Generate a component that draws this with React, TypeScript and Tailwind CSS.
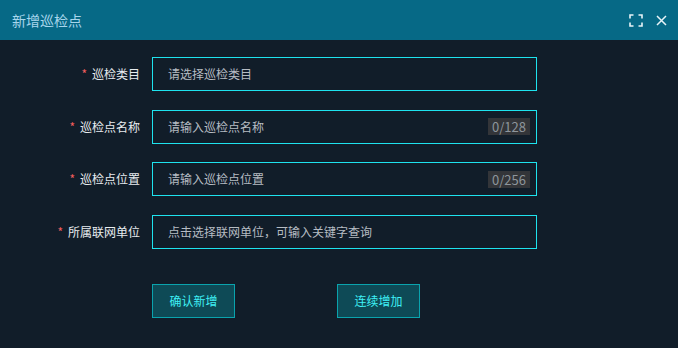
import React from "react";

const rows: { label: string; placeholder: string; counter?: string }[] = [
  { label: "巡检类目", placeholder: "请选择巡检类目" },
  { label: "巡检点名称", placeholder: "请输入巡检点名称", counter: "0/128" },
  { label: "巡检点位置", placeholder: "请输入巡检点位置", counter: "0/256" },
  { label: "所属联网单位", placeholder: "点击选择联网单位，可输入关键字查询" },
];

export default function App() {
  return (
    <div
      className="w-[678px] h-[348px] bg-[#111d29] flex flex-col"
      style={{ fontFamily: '"Noto Sans CJK SC", "Noto Sans", sans-serif' }}
    >
      <div className="h-[40px] bg-[#066986] flex items-center pl-[12px] pr-[11px]">
        <span className="text-[14px] text-[#a8d6ec] flex-1">新增巡检点</span>
        <svg width="14" height="13" viewBox="0 0 14 13" className="mr-[13px]" fill="none" stroke="#e8f4f8" strokeWidth="1.6">
          <path d="M1 4.5V1h3.5M9.5 1H13v3.5M13 8.5V12H9.5M4.5 12H1V8.5" />
        </svg>
        <svg width="11" height="11" viewBox="0 0 11 11" fill="none" stroke="#e8f4f8" strokeWidth="1.5">
          <path d="M1 1l9 9M10 1l-9 9" />
        </svg>
      </div>
      <div className="flex flex-col gap-[18.5px] pt-[17px]">
        {rows.map((r) => (
          <div key={r.label} className="flex items-center h-[34px]">
            <div className="w-[140px] text-right text-[12px] text-[#e8ecef]">
              <span className="text-[#f25d5d] mr-[5px]">*</span>
              {r.label}
            </div>
            <div className="ml-[12px] w-[385px] h-[34px] border border-[#1ee3ee] flex items-center pl-[15px] pr-[6px]">
              <span className="flex-1 text-[12px] text-[#b6bcc3]">{r.placeholder}</span>
              {r.counter && (
                <span className="h-[17px] px-[4px] bg-[#333539] text-[13px] leading-[17px] text-[#8e959c]">
                  {r.counter}
                </span>
              )}
            </div>
          </div>
        ))}
      </div>
      <div className="flex pl-[152px] mt-[35px] gap-[102px]">
        <button className="w-[83px] h-[34px] border border-[#0aa3ad] bg-[#0e4a56] text-[12px] text-[#3ff0f5]">
          确认新增
        </button>
        <button className="w-[83px] h-[34px] border border-[#0aa3ad] bg-[#0e4a56] text-[12px] text-[#3ff0f5]">
          连续增加
        </button>
      </div>
    </div>
  );
}
